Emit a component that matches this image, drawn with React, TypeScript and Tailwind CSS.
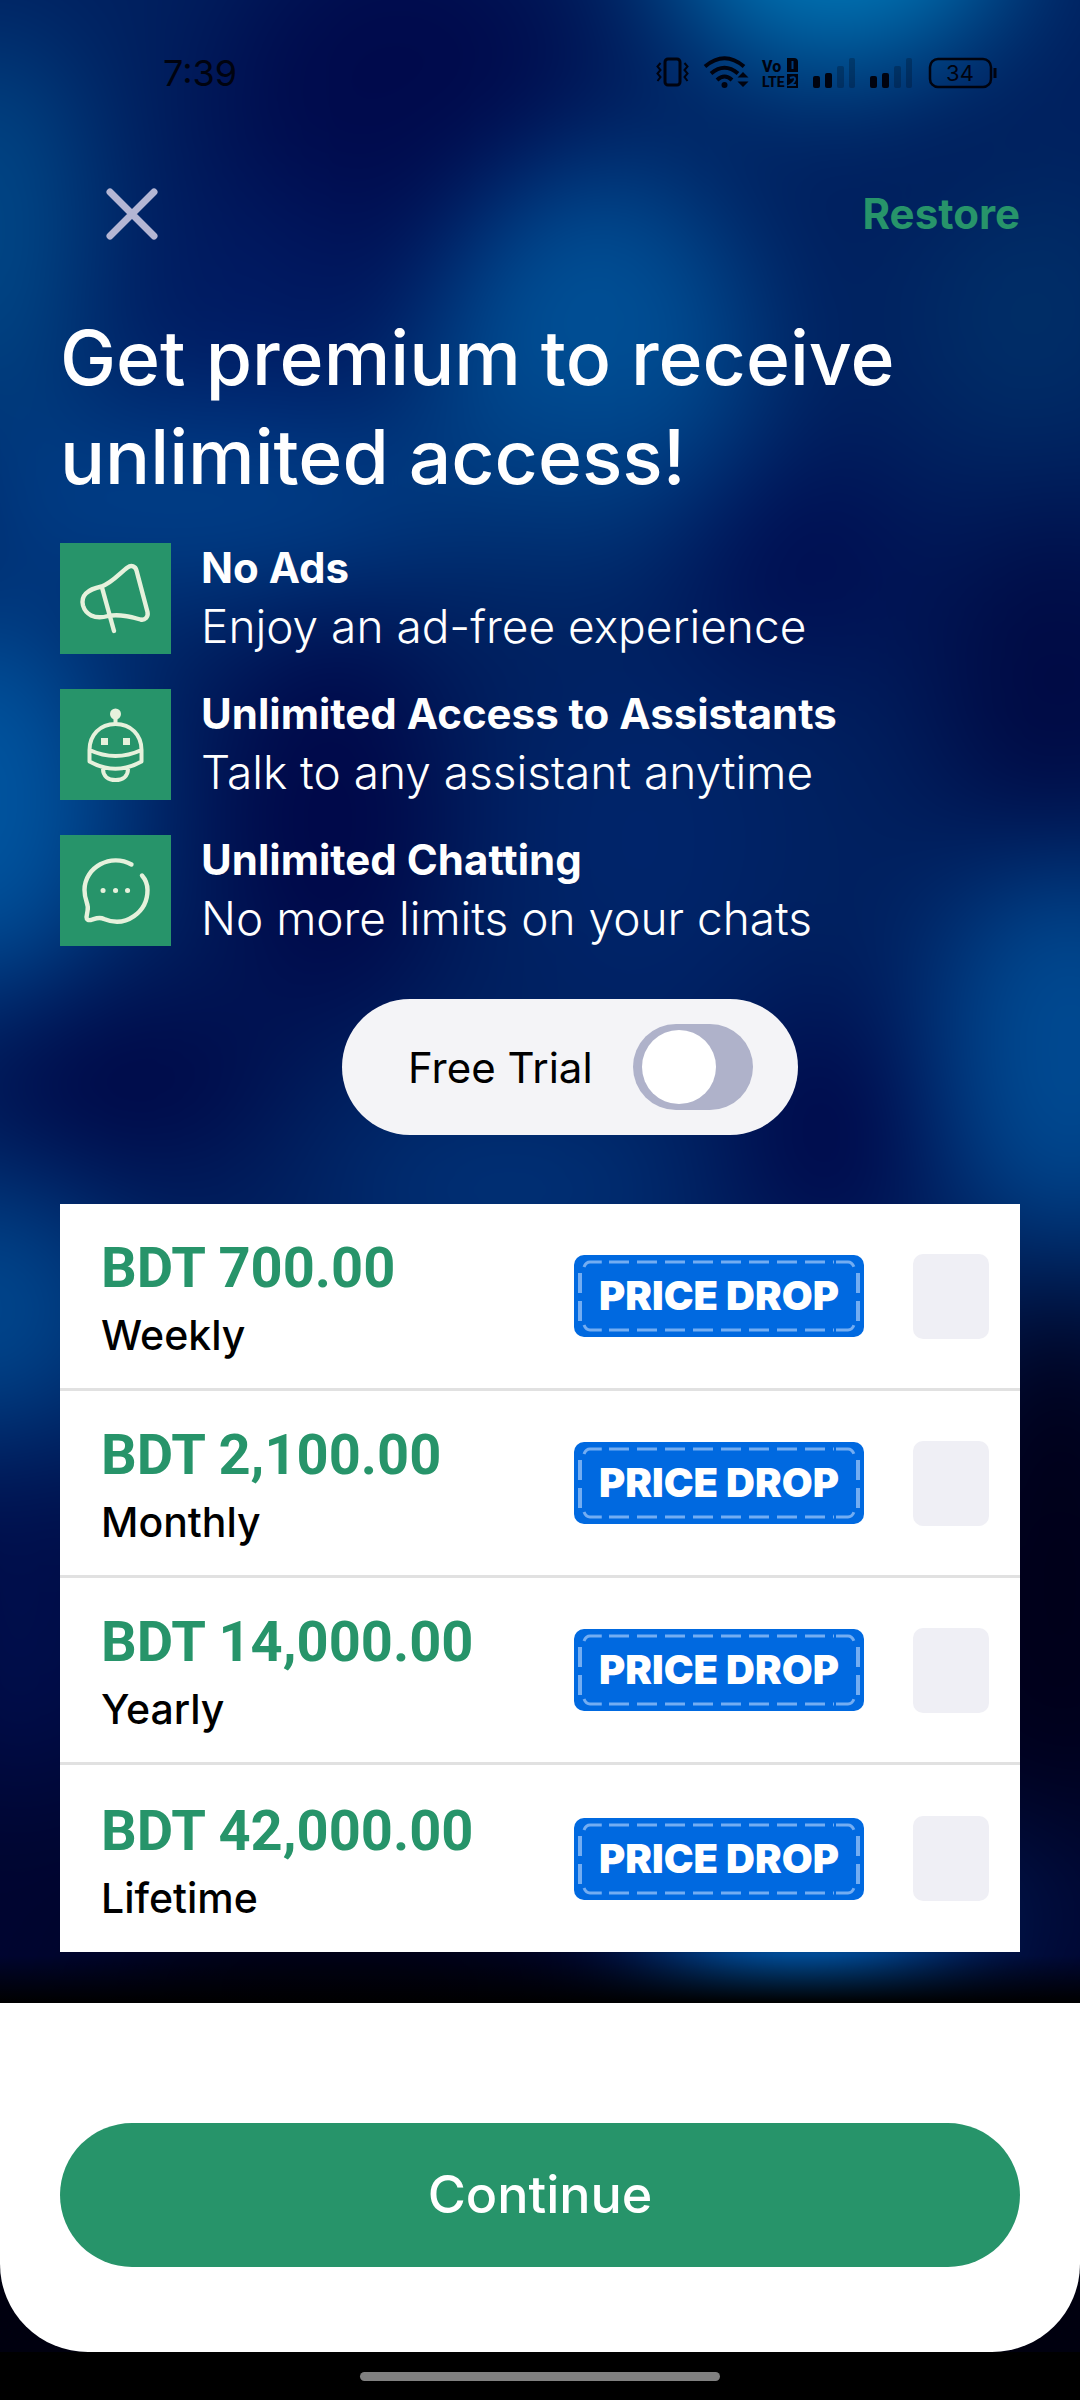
import { useState } from "react";

const features = [
  { title: "No Ads", text: "Enjoy an ad-free experience", Icon: MegaphoneIcon },
  { title: "Unlimited Access to Assistants", text: "Talk to any assistant anytime", Icon: RobotIcon },
  { title: "Unlimited Chatting", text: "No more limits on your chats", Icon: ChatIcon },
];

const plans = [
  { id: "weekly", price: "BDT 700.00", label: "Weekly" },
  { id: "monthly", price: "BDT 2,100.00", label: "Monthly" },
  { id: "yearly", price: "BDT 14,000.00", label: "Yearly" },
  { id: "lifetime", price: "BDT 42,000.00", label: "Lifetime" },
];

function MegaphoneIcon() {
  return (
    <svg viewBox="0 0 111 111" className="h-full w-full" fill="none" stroke="#e6f1dc" strokeWidth="4.4" strokeLinecap="round" strokeLinejoin="round">
      <path d="M41.500 43.500C52 40 60 30 67.500 24.500C71.500 21.500 75.500 23.500 76.500 27.500L87.500 69C88.500 74 85 77.500 80.500 76.500C70 73.500 60 71 48 73C34 77 25.500 71 23 62.500C20.500 53 27 46.500 41.500 43.500Z" />
      <path d="M42 44.500L54 88" />
    </svg>
  );
}

function RobotIcon() {
  return (
    <svg viewBox="0 0 111 111" className="h-full w-full" fill="none" stroke="#e6f1dc" strokeWidth="4" strokeLinejoin="round">
      <circle cx="55.500" cy="25" r="5.500" fill="#e6f1dc" stroke="none" />
      <path d="M55.500 28V36M29.500 61V72.500Q55.500 87 81.500 72.500V61C81.500 46 71 35 55.500 35S29.500 46 29.500 61ZM29.500 61Q55.500 73 81.500 61M43 80C43 87 48 91 55.500 91S68 87 68 80" />
      <path d="M41 49h7v7h-7zM63 49h7v7h-7z" fill="#e6f1dc" stroke="none" />
    </svg>
  );
}

function ChatIcon() {
  return (
    <svg viewBox="0 0 111 111" className="h-full w-full" fill="none" stroke="#e6f1dc" strokeWidth="4.4" strokeLinecap="round" strokeLinejoin="round">
      <path d="M71.500 29.500C51 18 24.500 32 24.500 55C24.500 67 29.500 69 27.500 76L26.500 82C26.500 84.500 28 85.500 31 85C36 83.500 39 81.500 44 84C66 93 87.500 77 87.500 55C87.500 49 85.500 44.500 82 40.500" />
      <path d="M43 55.500h.1M55.500 55.500h.1M67.500 55.500h.1" strokeWidth="5" />
    </svg>
  );
}

function Backdrop() {
  return (
    <svg viewBox="0 0 1080 2400" preserveAspectRatio="none" className="absolute inset-0 h-full w-full" aria-hidden="true">
      <defs>
        <filter id="soft" filterUnits="userSpaceOnUse" x="-400" y="-400" width="1880" height="3200" colorInterpolationFilters="sRGB">
          <feGaussianBlur stdDeviation="64" />
        </filter>
        <linearGradient id="fade" x1="0" y1="0" x2="0" y2="1">
          <stop offset="0" stopColor="#000" stopOpacity="0" />
          <stop offset="1" stopColor="#000" />
        </linearGradient>
      </defs>
      <g filter="url(#soft)">
        <rect x="-400" y="-400" width="1880" height="3200" fill="#00205f" />
        <rect x="-400" y="1500" width="1880" height="1300" fill="#000530" />
        <ellipse cx="840" cy="-60" rx="170" ry="130" fill="#0078b8" />
        <ellipse cx="-10" cy="230" rx="90" ry="200" fill="#004a8a" />
        <ellipse cx="400" cy="130" rx="190" ry="220" fill="#000a4c" />
        <ellipse cx="260" cy="310" rx="130" ry="120" fill="#001a62" />
        <ellipse cx="590" cy="360" rx="160" ry="200" fill="#004f95" />
        <ellipse cx="1030" cy="310" rx="110" ry="130" fill="#002f68" />
        <ellipse cx="950" cy="130" rx="70" ry="90" fill="#001c5a" />
        <ellipse cx="200" cy="500" rx="260" ry="90" fill="#00408a" />
        <ellipse cx="570" cy="490" rx="150" ry="70" fill="#003b80" />
        <ellipse cx="-20" cy="800" rx="130" ry="190" fill="#0055a0" />
        <ellipse cx="800" cy="560" rx="110" ry="100" fill="#000c50" />
        <ellipse cx="1060" cy="680" rx="130" ry="170" fill="#000a44" />
        <ellipse cx="330" cy="820" rx="110" ry="210" fill="#000748" />
        <ellipse cx="640" cy="840" rx="130" ry="170" fill="#00246a" />
        <ellipse cx="130" cy="1080" rx="150" ry="80" fill="#000645" />
        <ellipse cx="1070" cy="1050" rx="130" ry="190" fill="#004a92" />
        <ellipse cx="830" cy="1130" rx="80" ry="120" fill="#000547" />
        <ellipse cx="510" cy="1190" rx="170" ry="80" fill="#003278" />
        <ellipse cx="-20" cy="1310" rx="130" ry="120" fill="#00488f" />
        <ellipse cx="20" cy="1620" rx="120" ry="170" fill="#000e4c" />
        <ellipse cx="1060" cy="1560" rx="140" ry="270" fill="#00001a" />
        <ellipse cx="1000" cy="1900" rx="80" ry="70" fill="#001348" />
        <ellipse cx="350" cy="1980" rx="240" ry="80" fill="#00000f" />
        <rect x="-400" y="2110" width="1880" height="700" fill="#00000f" />
        <ellipse cx="800" cy="1960" rx="140" ry="100" fill="#0058a8" />
      </g>
      <rect y="1955" width="1080" height="48" fill="url(#fade)" />
    </svg>
  );
}

function StatusIcons() {
  return (
    <svg viewBox="0 0 344 34" className="h-[34px] w-[344px] text-[#00030f]" fill="none" stroke="currentColor" aria-hidden="true">
      <rect x="9" y="3" width="15" height="26" rx="3" strokeWidth="3" />
      <path d="M4.500 7l-3 3.500 3 3.500-3 3.500 3 3.500-3 4M28.500 7l3 3.500-3 3.500 3 3.500-3 3.500 3 4" strokeWidth="2" />
      <path d="M49 10.500Q68.500-6 88 10.500M55 17.500Q68.500 6 82 17.500M61 24Q68.500 17 76 24" strokeWidth="4" />
      <circle cx="68.500" cy="29" r="3" fill="currentColor" stroke="none" />
      <path d="M81.500 21.500L87 16l5.500 5.500zM81.500 25.500L87 31l5.500-5.500z" fill="currentColor" stroke="none" />
      <g fill="currentColor" stroke="none" fontFamily="Roboto, sans-serif" fontWeight="800">
        <text x="106" y="16" fontSize="16">Vo</text>
        <text x="106" y="31" fontSize="14">LTE</text>
      </g>
      <path d="M131 2h7q4 0 4 4v10h-11zM131 18h11v14h-11z" fill="currentColor" stroke="none" />
      <path d="M136.500 5v8M134 22q5-2 5 1t-5 6h6" stroke="#003b7c" strokeWidth="2" />
      <g fill="currentColor" stroke="none">
        <rect x="157" y="20" width="7" height="12" rx="2" />
        <rect x="169" y="17" width="7" height="15" rx="2" />
        <rect x="181" y="10" width="7" height="22" rx="2" opacity=".25" />
        <rect x="193" y="2" width="6" height="30" rx="2" opacity=".25" />
        <rect x="214" y="20" width="7" height="12" rx="2" />
        <rect x="226" y="17" width="7" height="15" rx="2" />
        <rect x="238" y="10" width="7" height="22" rx="2" opacity=".25" />
        <rect x="250" y="2" width="6" height="30" rx="2" opacity=".25" />
      </g>
      <rect x="274" y="3" width="61" height="28" rx="8" strokeWidth="2.500" />
      <path d="M339 12v10" strokeWidth="3" />
      <text x="304" y="25" textAnchor="middle" fontFamily="Inter, sans-serif" fontSize="22" fill="currentColor" stroke="none">34</text>
    </svg>
  );
}

function PriceDropBadge() {
  return (
    <div className="relative flex h-[82px] w-[290px] shrink-0 items-center justify-center rounded-[10px] bg-[#0069e0]">
      <svg viewBox="0 0 290 82" className="absolute inset-0 h-full w-full" fill="none" stroke="#73adf2" strokeWidth="3" aria-hidden="true">
        <path d="M10 12q2-5 6-5h12M35 7H260M262 7h12q4 0 6 5M10 70q2 5 6 5h12M35 75H260M262 75h12q4 0 6-5" strokeDasharray="20 8" />
        <path d="M6 18v48M284 18v48" strokeWidth="4" strokeDasharray="20 8" />
      </svg>
      <span className="relative text-[40px] leading-none font-black text-white">PRICE DROP</span>
    </div>
  );
}

export default function App() {
  const [freeTrial, setFreeTrial] = useState(false);
  const [selected, setSelected] = useState<string | null>(null);

  return (
    <div className="relative flex min-h-screen flex-col overflow-hidden bg-[#000010] font-['Inter','Noto_Sans',sans-serif]">
      <Backdrop />

      <div className="relative flex flex-1 flex-col">
        {/* Status bar */}
        <header className="flex h-[146px] items-center justify-between pr-[80px] pl-[163px] text-[36px] leading-none text-[#00030f]">
          <span>7:39</span>
          <StatusIcons />
        </header>

        <main className="flex flex-col px-[60px]">
          <div className="flex h-[136px] items-center justify-between pl-[46px]">
            <button type="button" aria-label="Close">
              <svg viewBox="0 0 52 52" className="h-[52px] w-[52px]" stroke="#b4b6d4" strokeWidth="7" strokeLinecap="round">
                <path d="M4 4L48 48M48 4L4 48" />
              </svg>
            </button>
            <button type="button" className="text-[42px] leading-none font-bold text-[#27946a]">
              Restore
            </button>
          </div>

          <h1 className="mt-[26px] max-w-[900px] text-[75px] leading-[99px] font-medium text-white">
            Get premium to receive unlimited access!
          </h1>

          {/* Features */}
          <ul className="mt-[37px] flex flex-col gap-[30px]">
            {features.map(({ title, text, Icon }) => (
              <li key={title} className="flex items-start gap-[30px] text-white">
                <div className="h-[111px] w-[111px] shrink-0 bg-[#27946a]">
                  <Icon />
                </div>
                <div>
                  <h2 className="text-[42px] leading-[50px] font-bold">{title}</h2>
                  <p className="text-[46px] leading-[66px] font-light">{text}</p>
                </div>
              </li>
            ))}
          </ul>

          {/* Free trial toggle */}
          <label className="mt-[48px] ml-[60px] flex h-[136px] w-[456px] items-center justify-between self-center rounded-full bg-[#f4f4f7] pr-[45px] pl-[66px]">
            <span className="text-[42px] text-black">Free Trial</span>
            <input
              type="checkbox"
              role="switch"
              checked={freeTrial}
              onChange={(e) => setFreeTrial(e.target.checked)}
              className="h-[86px] w-[120px] cursor-pointer appearance-none rounded-full bg-[#afb2ca] p-[9px] before:mt-[-3px] before:block before:h-[74px] before:w-[74px] before:rounded-full before:bg-white before:content-[''] checked:bg-[#27946a] checked:before:ml-7"
            />
          </label>

          {/* Plans */}
          <div className="mt-[69px] divide-y-3 divide-[#e1e1e1] bg-white">
            {plans.map((plan) => (
              <label key={plan.id} className="flex h-[187px] items-center pr-[31px] pl-[41px]">
                <div className="flex-1 pt-2">
                  <div className="font-[Roboto,sans-serif] text-[56px] leading-[70px] font-bold text-[#27946a]">{plan.price}</div>
                  <div className="text-[41px] leading-[64px] font-medium text-black">{plan.label}</div>
                </div>
                <PriceDropBadge />
                <input
                  type="checkbox"
                  checked={selected === plan.id}
                  onChange={() => setSelected(selected === plan.id ? null : plan.id)}
                  className="ml-[49px] h-[85px] w-[76px] shrink-0 appearance-none rounded-[10px] bg-[#efeff5] checked:bg-[#27946a]"
                />
              </label>
            ))}
          </div>
        </main>
      </div>

      <div className="relative mt-[50px] rounded-b-[88px] bg-white px-[60px] pt-[120px] pb-[85px]">
        <button type="button" className="h-[144px] w-full rounded-full bg-[#27946a] text-[52px] font-medium text-white">
          Continue
        </button>
      </div>

      <div className="relative flex h-12 items-center justify-center bg-black">
        <div className="h-[9px] w-1/3 rounded-full bg-[#808080]" />
      </div>
    </div>
  );
}
